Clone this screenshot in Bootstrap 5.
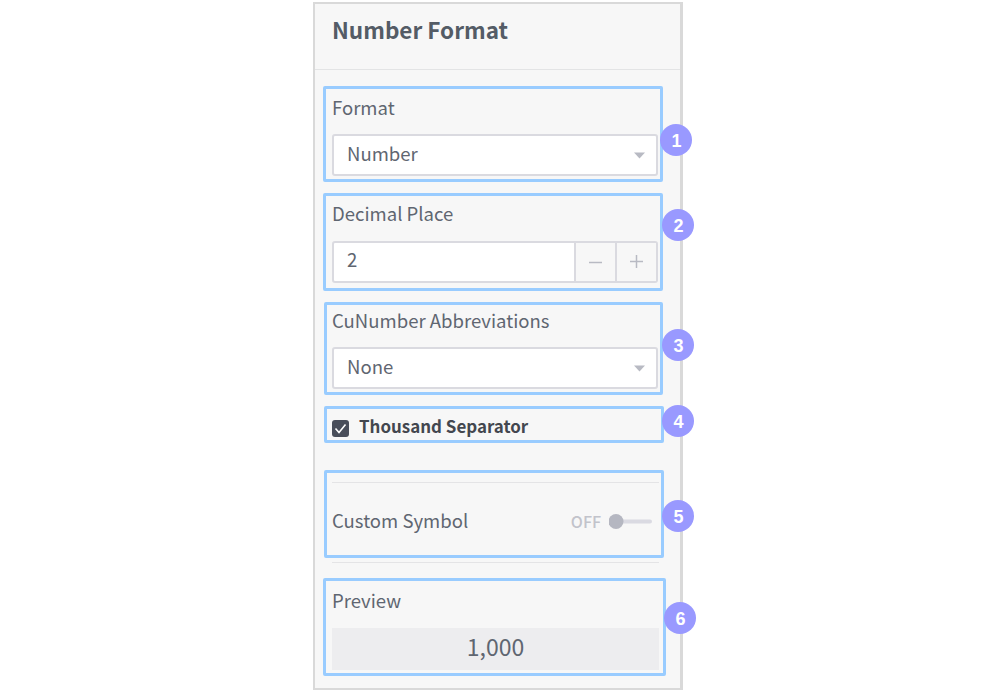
<!DOCTYPE html>
<html lang="en">
<head>
<meta charset="utf-8">
<meta name="viewport" content="width=device-width, initial-scale=1">
<title>Number Format</title>
<link href="https://cdn.jsdelivr.net/npm/bootstrap@5.3.0/dist/css/bootstrap.min.css" rel="stylesheet">
<style>
  body { font-family: "Noto Sans CJK KR", sans-serif; color: #5f6671; font-size: 18.55px; line-height: 28px; background: #fff; }
  .panel { width: 370px; height: 688px; margin: 2px 0 0 313px; background: #f7f7f7; border: 2px solid #d9d9d9; border-right-width: 3px; }
  .panel-head { height: 66px; border-bottom: 1px solid #e3e4e5; padding: 8px 0 0 17px; }
  .panel-head h1 { font-size: 22.5px; line-height: 34px; font-weight: 700; color: #545c66; }
  .marked { border: 3px solid #9cf; border-radius: 2px; margin-left: 8px; width: 340px; padding-left: 6px; }
  .inset { margin-left: 9px; }
  .marked.inset { padding-left: 5px; }
  .pin { left: 100%; width: 32px; height: 32px; border-radius: 50%; background: #99f; color: #fff; font: bold 18px/34px "Liberation Sans", sans-serif; text-align: center; padding-left: 1px; }
  .field { width: 326px; height: 42px; margin-top: 13px; background: #fff; border: 2px solid #dadae0; border-radius: 3px; padding-left: 13px; }
  .field-text { line-height: 33px; }
  .decimal .field-text { line-height: 32px; }
  .step { width: 41px; height: 38px; background: #f7f7f7; border-left: 2px solid #dadae0; }
  .tick { width: 17px; height: 17px; background: #494e5a; border-radius: 3px; margin-top: 8px; }
  .rule { width: 327px; height: 1px; background: #e4e4e6; }
  .panel-rule { margin: 4px 0 0 17px; }
  .preview-box { width: 327px; height: 42px; margin-top: 14px; background: #ededef; font-size: 23px; line-height: 37px; }
  .format { height: 96px; margin-top: 16px; padding-top: 4px; }
  .decimal { height: 98px; margin-top: 11px; padding-top: 3px; }
  .decimal .field { margin-top: 14px; }
  .abbr { height: 93px; width: 339px; margin-top: 11px; padding-top: 1px; }
  .thousand { height: 37px; margin-top: 11px; padding-top: 3px; }
  .symbol { height: 88px; margin-top: 27px; padding-top: 9px; }
  .symbol-row { margin-top: 23px; }
  .preview { height: 98px; width: 343px; margin-top: 15px; padding-top: 5px; }
  .strong-label { font-size: 16.95px; font-weight: 700; color: #43474f; margin-left: 10px; }
  .off { font-size: 16px; font-weight: 500; color: #c2c3cb; line-height: 30px; }
  .format .pin { top: 35px; }
  .decimal .pin { top: 13px; margin-left: 2px; }
  .abbr .pin { top: 24px; margin-left: 2px; }
  .thousand .pin { top: -4px; margin-left: 1px; }
  .symbol .pin { top: 27px; margin-left: 1px; }
  .preview .pin { top: 21px; margin-left: 1px; }
</style>
</head>
<body class="overflow-hidden">
<main class="panel">
  <header class="panel-head"><h1 class="m-0">Number Format</h1></header>

  <section class="marked format position-relative">
    <div>Format</div>
    <div class="field d-flex align-items-start justify-content-between">
      <span class="field-text">Number</span>
      <svg class="align-self-center" width="22" height="8" viewBox="0 0 22 8"><path d="M0 1.500h11L5.500 7.500z" fill="#b8bac3"/></svg>
    </div>
    <span class="pin position-absolute">1</span>
  </section>

  <section class="marked decimal position-relative">
    <div>Decimal Place</div>
    <div class="field d-flex">
      <span class="field-text flex-grow-1">2</span>
      <span class="step d-flex align-items-center justify-content-center"><svg width="14" height="14"><path d="M0 7.500h13" stroke="#b8bac3" stroke-width="1.500"/></svg></span>
      <span class="step d-flex align-items-center justify-content-center"><svg width="14" height="14"><path d="M0 6.500h13M6.500 0v13" stroke="#b8bac3" stroke-width="1.500"/></svg></span>
    </div>
    <span class="pin position-absolute">2</span>
  </section>

  <section class="marked inset abbr position-relative">
    <div>CuNumber Abbreviations</div>
    <div class="field d-flex align-items-start justify-content-between">
      <span class="field-text">None</span>
      <svg class="align-self-center" width="22" height="8" viewBox="0 0 22 8"><path d="M0 1.500h11L5.500 7.500z" fill="#b8bac3"/></svg>
    </div>
    <span class="pin position-absolute">3</span>
  </section>

  <section class="marked inset thousand position-relative d-flex align-items-start">
    <svg class="tick" viewBox="0 0 17 17"><path d="M3.500 8.500l3.500 4L13.500 4.500" fill="none" stroke="#fff" stroke-width="1.600"/></svg>
    <span class="strong-label">Thousand Separator</span>
    <span class="pin position-absolute">4</span>
  </section>

  <section class="marked inset symbol position-relative">
    <div class="rule"></div>
    <div class="symbol-row d-flex align-items-start">
      <span class="flex-grow-1">Custom Symbol</span>
      <span class="off">OFF</span>
      <svg class="ms-2 mt-2" width="52" height="16" viewBox="0 0 52 16"><path d="M14 7.500h27" stroke="#dadae2" stroke-width="4" stroke-linecap="round"/><circle cx="7" cy="7.500" r="7.500" fill="#b5b7c1"/></svg>
    </div>
    <span class="pin position-absolute">5</span>
  </section>
  <div class="rule panel-rule"></div>

  <section class="marked preview position-relative">
    <div>Preview</div>
    <div class="preview-box text-center">1,000</div>
    <span class="pin position-absolute">6</span>
  </section>
</main>
<script src="https://cdn.jsdelivr.net/npm/bootstrap@5.3.0/dist/js/bootstrap.bundle.min.js"></script>
</body>
</html>
